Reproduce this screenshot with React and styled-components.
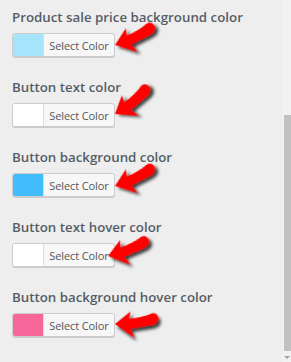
import React from "react";
import styled, { createGlobalStyle } from "styled-components";

const GlobalStyle = createGlobalStyle`
  html, body {
    margin: 0;
    padding: 0;
    background: #eeeeee;
  }
  body {
    width: 291px;
    height: 362px;
    overflow: hidden;
    font-family: "Open Sans", "Liberation Sans", sans-serif;
  }
`;

/*============= Panel layout ================*/
const Panel = styled.div`
  display: flex;
  width: 291px;
  height: 362px;
  background: #eeeeee;
`;

const Content = styled.div`
  flex: 1;
  padding: 7px 0 0 12px;
  display: flex;
  flex-direction: column;
  gap: 20px;
`;

const Setting = styled.div`
  display: flex;
  flex-direction: column;
  gap: 6px;
`;

const Label = styled.div`
  font-size: 13.3px;
  font-weight: 600;
  line-height: 20px;
  color: #555d66;
  white-space: nowrap;
`;

/*============= Colour picker button ================*/
const ControlRow = styled.div`
  position: relative;
  display: flex;
  height: 24px;
`;

const PickerButton = styled.div`
  display: flex;
  width: 103px;
  height: 24px;
  box-sizing: border-box;
  border: 1px solid #cccccc;
  border-radius: 3px;
  background: #f7f7f7;
  box-shadow: 0 1px 0 #cccccc;
  overflow: hidden;
`;

const Swatch = styled.span`
  width: 30px;
  background: ${(p) => p.color};
  border-right: 1px solid #dddddd;
`;

const PickerText = styled.span`
  flex: 1;
  display: flex;
  align-items: center;
  justify-content: center;
  font-size: 11px;
  color: #555555;
  letter-spacing: -0.1px;
`;

/*============= Red annotation arrow ================*/
const ArrowSvg = styled.svg`
  position: absolute;
  top: -8px;
  left: ${(p) => p.tip - 5}px;
  overflow: visible;
`;

const Arrow = ({ tip, dy, angle }) => (
  <ArrowSvg tip={tip} width="60" height="40" viewBox="0 0 60 40">
    <defs>
      <filter id="arrowShadow" x="-30%" y="-50%" width="160%" height="200%">
        <feDropShadow dx="2" dy="3" stdDeviation="1.4" floodColor="#000" floodOpacity="0.75" />
      </filter>
    </defs>
    <g transform={`translate(5 ${20 + dy}) rotate(${angle}) scale(1.14)`} filter="url(#arrowShadow)">
      <path
        d="M0,0 L14,-10.5 L12.5,-4.2 Q24,-4.8 32.5,-8.2 Q38,-8.7 38.3,-3 Q37.5,1.6 31,2.4 Q22,3.6 13.5,4.6 L16.5,12.5 Z"
        fill="#ff0000"
      />
    </g>
  </ArrowSvg>
);

/*============= Scrollbar ================*/
const Track = styled.div`
  width: 9px;
  display: flex;
  flex-direction: column;
  align-items: flex-end;
  background: #f1f1f1;
`;

const Thumb = styled.div`
  width: 7px;
  height: 236px;
  margin-top: 115px;
  background: #c1c1c1;
`;

const ScrollArrow = styled.div`
  margin-top: 5px;
  margin-right: 1px;
  width: 0;
  height: 0;
  border-left: 3px solid transparent;
  border-right: 3px solid transparent;
  border-top: 3px solid #a3a3a3;
`;

const settings = [
  { label: "Product sale price background color", color: "#a6e4fc", tip: 103, dy: 0, angle: -20 },
  { label: "Button text color", color: "#ffffff", tip: 103, dy: -1, angle: -33 },
  { label: "Button background color", color: "#42bdfc", tip: 103, dy: 1, angle: -20 },
  { label: "Button text hover color", color: "#ffffff", tip: 96, dy: 1, angle: -16 },
  { label: "Button background hover color", color: "#f7679a", tip: 103, dy: -1, angle: -2 },
];

const App = () => {
  return (
    <Panel>
      <GlobalStyle />
      <Content>
        {settings.map((item, index) => (
          <Setting key={index}>
            <Label>{item.label}</Label>
            <ControlRow>
              <PickerButton>
                <Swatch color={item.color} />
                <PickerText>Select Color</PickerText>
              </PickerButton>
              <Arrow tip={item.tip} dy={item.dy} angle={item.angle} />
            </ControlRow>
          </Setting>
        ))}
      </Content>
      <Track>
        <Thumb />
        <ScrollArrow />
      </Track>
    </Panel>
  );
};

export default App;
